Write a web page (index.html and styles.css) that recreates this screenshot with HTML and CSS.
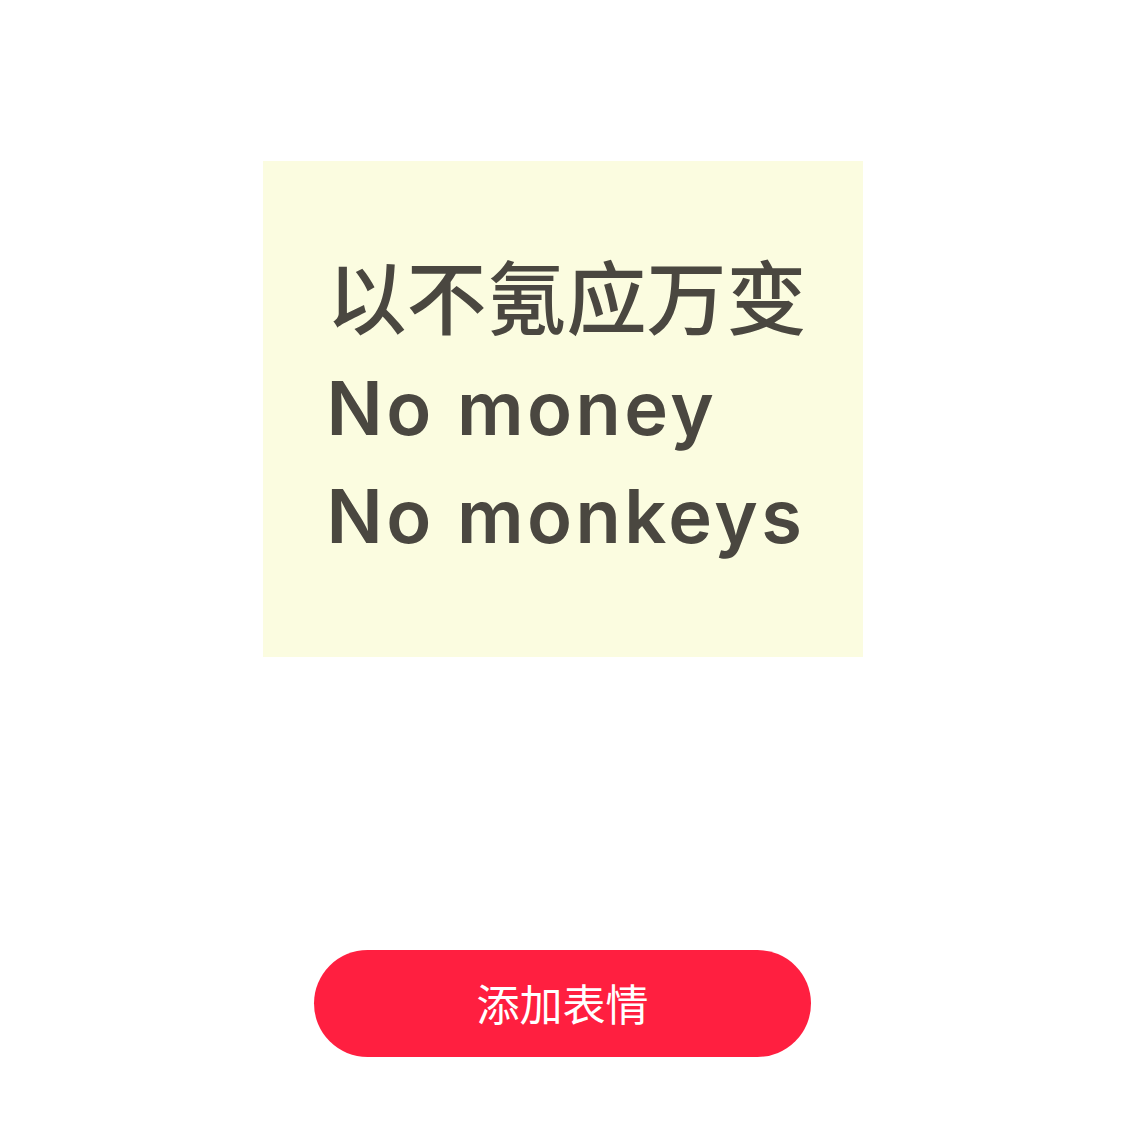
FILE: index.html
```html
<!DOCTYPE html>
<html lang="zh">
<head>
<meta charset="utf-8">
<link rel="stylesheet" href="styles.css">
</head>
<body>
<main class="page">
  <div class="sticker">
    <div class="line cn">以不氪应万变</div>
    <div class="line en">No money</div>
    <div class="line en">No monkeys</div>
  </div>
  <button class="add-btn">添加表情</button>
</main>
</body>
</html>
```
FILE: styles.css
```css
html, body {
  margin: 0;
  padding: 0;
  background: #ffffff;
}
.page {
  width: 1125px;
  height: 1125px;
  display: flex;
  flex-direction: column;
  align-items: center;
}
.sticker {
  margin-top: 161px;
  width: 600px;
  height: 496px;
  box-sizing: border-box;
  background: #fbfce0;
  padding: 72px 0 0 64px;
  color: #4a4740;
}
.line {
  white-space: nowrap;
}
.cn {
  font-family: "Noto Sans CJK SC", sans-serif;
  font-weight: 500;
  font-size: 80px;
  line-height: 121px;
  letter-spacing: 0;
}
.en {
  font-family: Inter, "Liberation Sans", sans-serif;
  font-weight: 560;
  font-size: 74px;
  line-height: 108px;
  letter-spacing: 3.5px;
}
.add-btn {
  margin-top: 293px;
  width: 497px;
  height: 107px;
  border: none;
  border-radius: 54px;
  background: #ff1f40;
  color: #ffffff;
  font-family: "Noto Sans CJK SC", sans-serif;
  font-size: 43px;
  font-weight: 400;
  padding: 0 0 4px 0;
}
```
